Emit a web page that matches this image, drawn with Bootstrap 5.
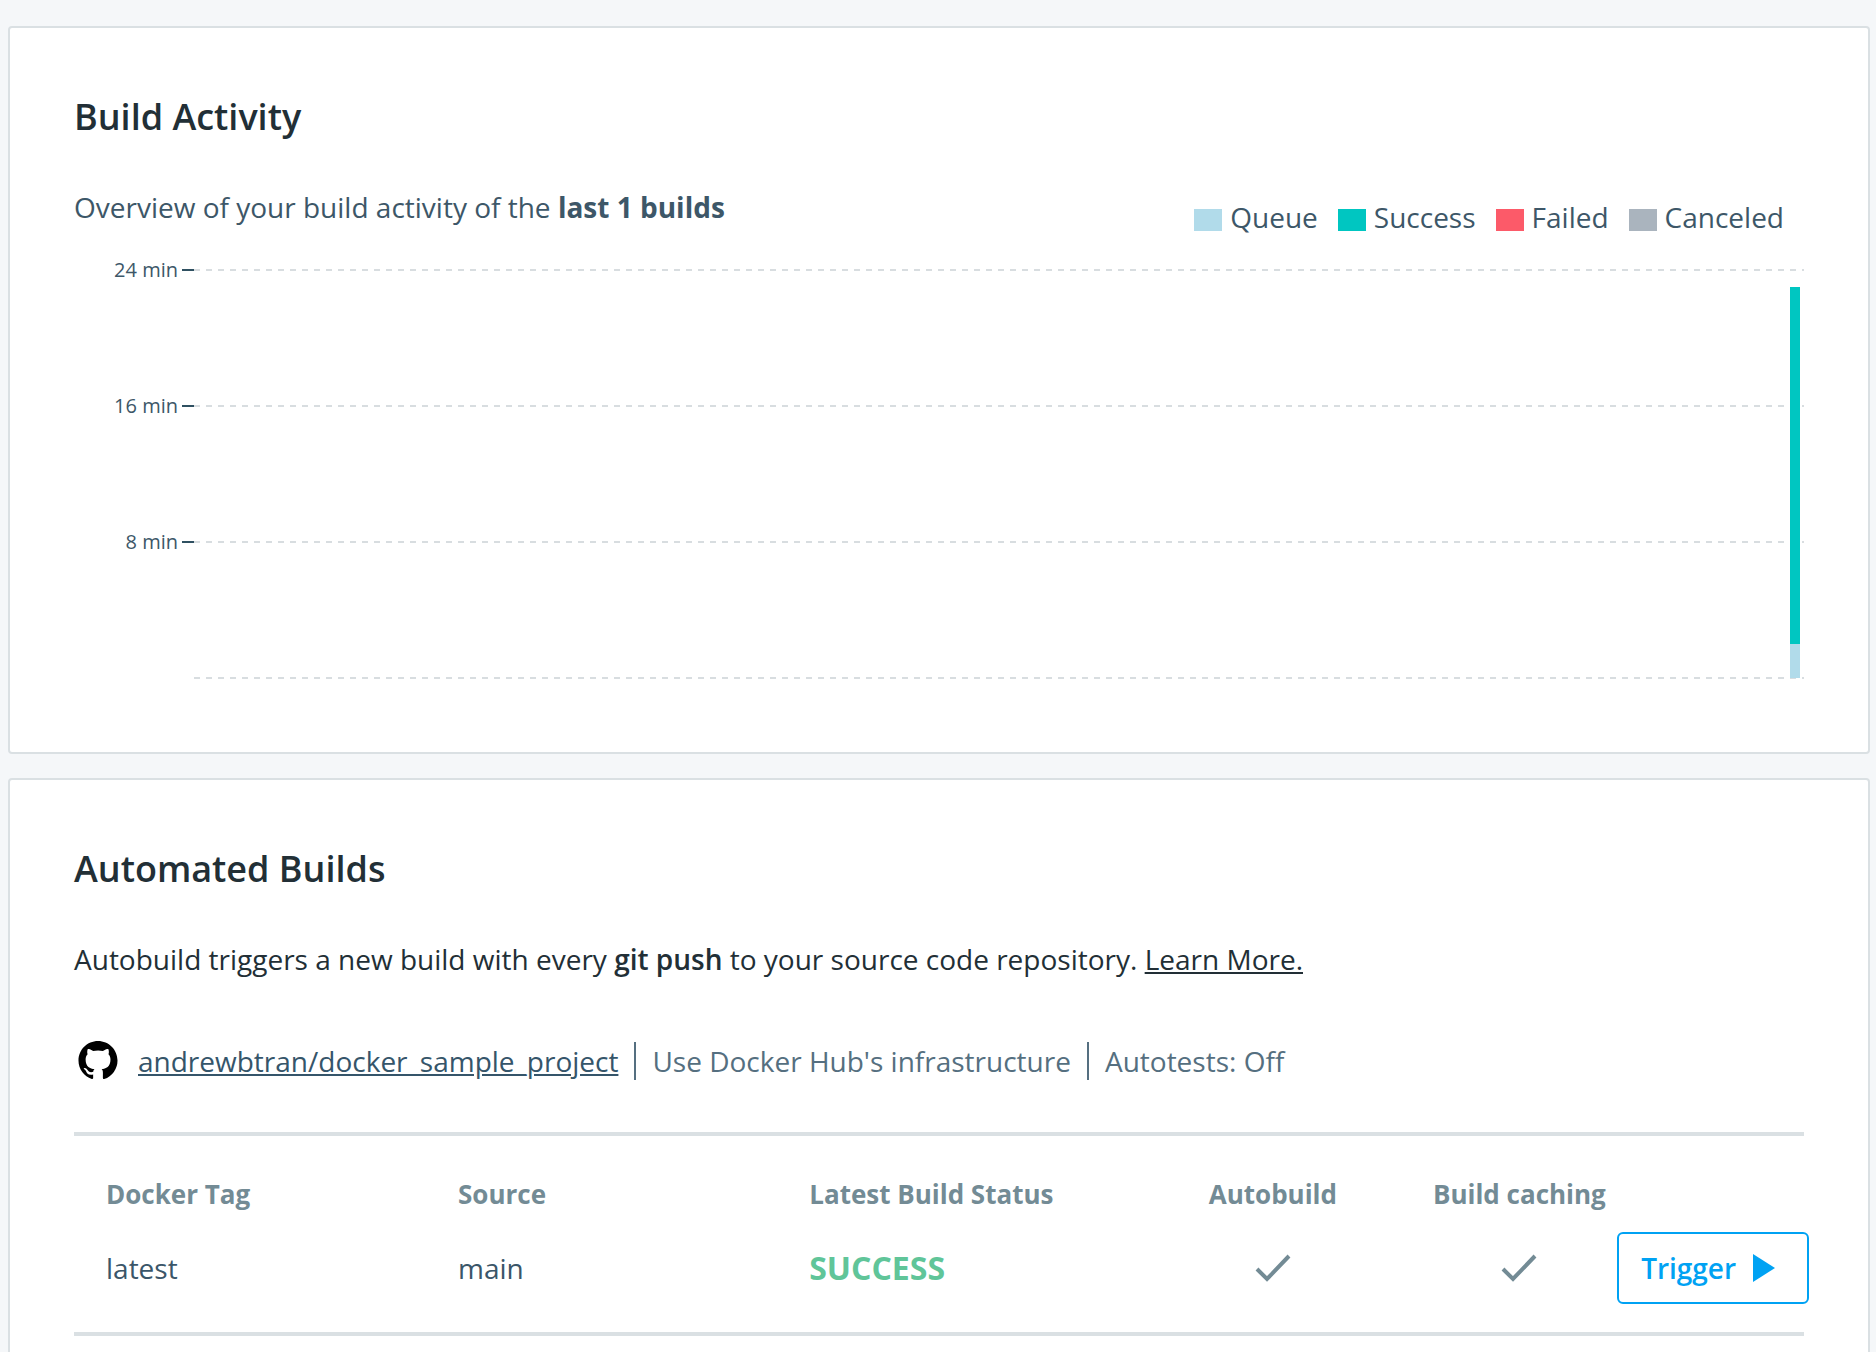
<!DOCTYPE html>
<html lang="en">
<head>
<meta charset="utf-8">
<meta name="viewport" content="width=device-width, initial-scale=1">
<title>Builds</title>
<link href="https://cdn.jsdelivr.net/npm/bootstrap@5.3.0/dist/css/bootstrap.min.css" rel="stylesheet">
<style>
  body {
    background: #f5f7f9;
    color: #3d5768;
    font-family: "Open Sans", "Noto Sans", sans-serif;
    font-size: 28px;
    line-height: 42px;
  }
  .page { padding: 26px 6px 24px 8px; gap: 24px; }
  .panel { border: 2px solid #dae0e3; border-radius: 4px; color: inherit; }
  .panel > .card-body { padding: 64px; }
  .panel-title { font-size: 36px; line-height: 50px; font-weight: 600; color: #222f36; margin-bottom: 44px; }
  .ink { color: #222f36; }
  .ink a { color: inherit; }
  .intro { margin-bottom: 60px; }
  b { font-weight: 600; }

  .legend { padding: 10px 20px 0 0; gap: 20px; }
  .legend li { gap: 8px; }
  .swatch { width: 28px; height: 22px; margin-top: 6px; }
  .queue { background: #b1dbea; fill: #b1dbea; }
  .success { background: #00c6c1; fill: #00c6c1; }
  .failed { background: #fc5a69; fill: #fc5a69; }
  .canceled { background: #aab4be; fill: #aab4be; }

  .chart { height: 450px; }
  .chart text { font-size: 20px; fill: #3d5768; text-anchor: end; }
  .chart .grid line { stroke: #d8dde0; stroke-width: 2; stroke-dasharray: 6 6; }
  .chart .ticks line { stroke: #2f5061; stroke-width: 2; }

  .repo { gap: 16px; padding-left: 4px; margin-bottom: 50px; color: #556f80; }
  .repo a { color: #35556a; margin-left: 4px; }
  .divider { width: 2px; height: 38px; background: #556f80; }

  .builds { table-layout: fixed; border-top: 4px solid #dae0e3; border-bottom: 4px solid #dae0e3; }
  .builds th { padding: 38px 0 0; font-size: 26px; line-height: 40px; font-weight: 700; color: #738b95; }
  .builds td { padding: 18px 0 28px; vertical-align: middle; color: #3a5669; }
  .builds th:first-child, .builds td:first-child { padding-left: 32px; }
  .builds .state { font-size: 32px; font-weight: 700; color: #60c599; }
  .col-tag { width: 22.2%; }
  .col-source { width: 20.3%; }
  .col-status { width: 18.2%; }
  .col-auto { width: 17.2%; }
  .col-cache { width: 11.3%; }
  .trigger {
    --bs-btn-color: #00a2f3; --bs-btn-border-color: #00a2f3;
    --bs-btn-hover-bg: #00a2f3; --bs-btn-hover-border-color: #00a2f3; --bs-btn-hover-color: #fff;
    --bs-btn-border-width: 2px; --bs-btn-border-radius: 6px;
    --bs-btn-font-size: 28px; --bs-btn-font-weight: 600; --bs-btn-line-height: 42px;
    --bs-btn-padding-x: 22px; --bs-btn-padding-y: 13px;
    gap: 17px; padding-right: 32px;
  }
</style>
<script src="https://cdn.jsdelivr.net/npm/bootstrap@5.3.0/dist/js/bootstrap.bundle.min.js"></script>
</head>
<body>
<main class="page d-flex flex-column">
  <section class="card panel">
    <div class="card-body">
      <h2 class="panel-title">Build Activity</h2>
      <div class="d-flex justify-content-between align-items-start">
        <p class="mb-0">Overview of your build activity of the <b class="fw-bold">last 1 builds</b></p>
        <ul class="legend list-unstyled d-flex mb-0">
          <li class="d-flex align-items-center"><span class="swatch queue"></span>Queue</li>
          <li class="d-flex align-items-center"><span class="swatch success"></span>Success</li>
          <li class="d-flex align-items-center"><span class="swatch failed"></span>Failed</li>
          <li class="d-flex align-items-center"><span class="swatch canceled"></span>Canceled</li>
        </ul>
      </div>
      <svg class="chart d-block w-100" role="img" aria-label="Build duration in minutes">
        <g class="grid">
          <line x1="120" x2="100%" y1="32" y2="32"/>
          <line x1="120" x2="100%" y1="168" y2="168"/>
          <line x1="120" x2="100%" y1="304" y2="304"/>
          <line x1="120" x2="100%" y1="440" y2="440"/>
        </g>
        <svg x="100%" overflow="visible">
          <rect class="success" x="-14" y="49" width="10" height="357"/>
          <rect class="queue" x="-14" y="406" width="10" height="34"/>
        </svg>
        <g class="ticks">
          <line x1="108" x2="120" y1="32" y2="32"/>
          <line x1="108" x2="120" y1="168" y2="168"/>
          <line x1="108" x2="120" y1="304" y2="304"/>
        </g>
        <text x="104" y="39">24 min</text>
        <text x="104" y="175">16 min</text>
        <text x="104" y="311">8 min</text>
      </svg>
    </div>
  </section>

  <section class="card panel">
    <div class="card-body">
      <h2 class="panel-title">Automated Builds</h2>
      <p class="intro ink">Autobuild triggers a new build with every <b>git push</b> to your source code repository. <a href="#">Learn More.</a></p>
      <div class="repo d-flex align-items-center">
        <svg width="40" height="40" viewBox="-.2 0 16.4 16.4" aria-hidden="true"><path d="M8 0C3.58 0 0 3.58 0 8c0 3.54 2.290 6.530 5.470 7.590.4.070.55-.17.55-.38 0-.19-.01-.82-.01-1.490-2.010.37-2.530-.49-2.690-.94-.09-.23-.48-.94-.82-1.130-.28-.15-.68-.52-.01-.53.63-.01 1.080.58 1.230.82.72 1.210 1.870.87 2.330.66.07-.52.28-.87.51-1.070-1.780-.2-3.640-.89-3.640-3.950 0-.87.31-1.590.82-2.150-.08-.2-.36-1.020.08-2.120 0 0 .67-.21 2.200.82.64-.18 1.320-.27 2-.27s1.360.09 2 .27c1.530-1.040 2.200-.82 2.200-.82.44 1.100.16 1.920.08 2.120.51.56.82 1.270.82 2.150 0 3.070-1.870 3.750-3.650 3.950.29.25.54.73.54 1.480 0 1.070-.01 1.930-.01 2.200 0 .21.15.46.55.38A8.010 8.010 0 0 0 16 8c0-4.420-3.580-8-8-8z" fill="#000"/></svg>
        <a href="#">andrewbtran/docker_sample_project</a>
        <span class="divider"></span>
        <span>Use Docker Hub's infrastructure</span>
        <span class="divider"></span>
        <span>Autotests: Off</span>
      </div>
      <table class="builds w-100">
        <colgroup><col class="col-tag"><col class="col-source"><col class="col-status"><col class="col-auto"><col class="col-cache"><col></colgroup>
        <thead>
          <tr>
            <th scope="col">Docker Tag</th>
            <th scope="col">Source</th>
            <th scope="col">Latest Build Status</th>
            <th scope="col" class="text-center">Autobuild</th>
            <th scope="col" class="text-center">Build caching</th>
            <th></th>
          </tr>
        </thead>
        <tbody>
          <tr>
            <td>latest</td>
            <td>main</td>
            <td class="state">SUCCESS</td>
            <td class="text-center"><svg class="d-block mx-auto" width="36" height="36" viewBox="0 0 36 36" role="img" aria-label="On"><path d="M2 19L12 29L34 6" fill="none" stroke="#738b95" stroke-width="4"/></svg></td>
            <td class="text-center"><svg class="d-block mx-auto" width="36" height="36" viewBox="0 0 36 36" role="img" aria-label="On"><path d="M2 19L12 29L34 6" fill="none" stroke="#738b95" stroke-width="4"/></svg></td>
            <td><button type="button" class="trigger btn d-inline-flex align-items-center">Trigger <svg width="22" height="28" viewBox="0 0 22 28" aria-hidden="true"><path d="M0 0L22 14L0 28z" fill="currentColor"/></svg></button></td>
          </tr>
        </tbody>
      </table>
    </div>
  </section>
</main>
</body>
</html>
